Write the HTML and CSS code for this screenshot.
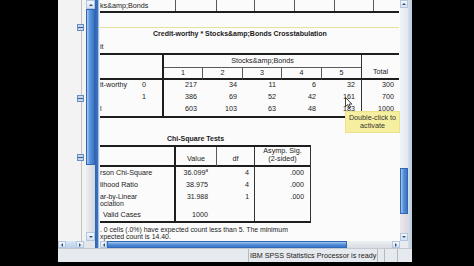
FILE: index.html
```html
<!DOCTYPE html>
<html lang="en">
<head>
<meta charset="utf-8">
<title>IBM SPSS Statistics Viewer</title>
<link rel="stylesheet" href="styles.css">
</head>
<body>
<div class="screen">
  <div class="window">
    <div class="panes">
      <div class="outline">
        <div class="outline-main">
          <div class="tree">
            <span class="node node-a"></span>
            <span class="node node-b"></span>
            <span class="node node-c"></span>
          </div>
          <div class="vscroll vs-left">
            <span class="sb-btn up"></span>
            <span class="vthumb thumb-left"></span>
            <span class="sb-track vtrack"></span>
            <span class="sb-btn down"></span>
          </div>
        </div>
        <div class="outline-bottom">
          <div class="hs-left">
            <span class="sb-btn left"></span>
            <span class="hs-left-thumb"></span>
            <span class="sb-btn right"></span>
          </div>
          <div class="outline-corner"></div>
        </div>
      </div>
      <div class="splitter"></div>
      <div class="viewer">
        <div class="viewer-main">
          <div class="content">
            <div class="prev-table">
              <div class="pcell">ks&amp;amp;Bonds</div>
              <div class="pcell"></div>
              <div class="pcell"></div>
              <div class="pcell"></div>
              <div class="pcell"></div>
              <div class="pcell"></div>
              <div class="pcell"></div>
            </div>
            <div class="sel-line"></div>
            <div class="title title-xt">Credit-worthy * Stocks&amp;amp;Bonds Crosstabulation</div>
            <div class="caption">it</div>
            <div class="xt">
              <div class="xt-stub"></div>
              <div class="xt-span">Stocks&amp;amp;Bonds</div>
              <div class="xt-total">Total</div>
              <div class="xt-num">1</div>
              <div class="xt-num">2</div>
              <div class="xt-num">3</div>
              <div class="xt-num">4</div>
              <div class="xt-num last">5</div>

              <div class="xt-label">it-worthy</div>
              <div class="xt-label b">0</div>
              <div class="xt-val">217</div>
              <div class="xt-val">34</div>
              <div class="xt-val">11</div>
              <div class="xt-val">6</div>
              <div class="xt-val">32</div>
              <div class="xt-val tot">300</div>

              <div class="xt-label"></div>
              <div class="xt-label b">1</div>
              <div class="xt-val">386</div>
              <div class="xt-val">69</div>
              <div class="xt-val">52</div>
              <div class="xt-val">42</div>
              <div class="xt-val">161</div>
              <div class="xt-val tot">700</div>

              <div class="xt-label">l</div>
              <div class="xt-label b"></div>
              <div class="xt-val">603</div>
              <div class="xt-val">103</div>
              <div class="xt-val">63</div>
              <div class="xt-val">48</div>
              <div class="xt-val">183</div>
              <div class="xt-val tot">1000</div>
            </div>

            <div class="title title-chi">Chi-Square Tests</div>
            <div class="chi">
              <div class="ch-h stub"></div>
              <div class="ch-h value">Value</div>
              <div class="ch-h df">df</div>
              <div class="ch-h sig">Asymp. Sig.<br>(2-sided)</div>

              <div class="ch-stub">rson Chi-Square</div>
              <div class="ch-val value">36.099<sup class="note">a</sup></div>
              <div class="ch-val df">4</div>
              <div class="ch-val sig">.000</div>

              <div class="ch-stub">lihood Ratio</div>
              <div class="ch-val value">38.975</div>
              <div class="ch-val df">4</div>
              <div class="ch-val sig">.000</div>

              <div class="ch-stub tall">ar-by-Linear<br>ociation</div>
              <div class="ch-val value tall">31.988</div>
              <div class="ch-val df tall">1</div>
              <div class="ch-val sig tall">.000</div>

              <div class="ch-stub indent">Valid Cases</div>
              <div class="ch-val value">1000</div>
              <div class="ch-val df"></div>
              <div class="ch-val sig"></div>
            </div>
            <div class="footnote">. 0 cells (.0%) have expected count less than 5. The minimum<br>xpected count is 14.40.</div>

            <div class="tooltip">Double-click to<br>activate</div>
            <svg class="cursor" width="8" height="12" viewBox="0 0 8 12">
              <path d="M0.5 0.5 L0.5 9.5 L2.6 7.6 L4 10.8 L5.4 10.2 L4 7.1 L6.8 7.1 Z" fill="#ffffff" stroke="#111111" stroke-width="0.8" stroke-linejoin="round"/>
            </svg>
          </div>
          <div class="vscroll vs-right">
            <span class="sb-btn up"></span>
            <span class="sb-track rtrack-a"></span>
            <span class="vthumb thumb-right"></span>
            <span class="sb-track rtrack-b"></span>
            <span class="sb-btn down"></span>
          </div>
        </div>
        <div class="viewer-bottom">
          <div class="hscroll">
            <span class="sb-btn left"></span>
            <span class="hthumb"></span>
            <span class="sb-track htrack"></span>
            <span class="sb-btn right"></span>
          </div>
          <div class="corner"></div>
        </div>
      </div>
      <div class="frame-right"></div>
    </div>
    <div class="statusbar">
      <div class="sb-cell sb-first"></div>
      <div class="sb-cell sb-msg">IBM SPSS Statistics Processor is ready</div>
      <div class="sb-cell sb-s1"></div>
      <div class="sb-cell sb-s2"></div>
      <div class="sb-cell sb-s3"></div>
    </div>
  </div>
</div>
</body>
</html>
```
FILE: styles.css
```css
* { box-sizing: border-box; }
html, body { margin: 0; padding: 0; }
body {
  background: #000;
  width: 474px;
  height: 266px;
  overflow: hidden;
  font-family: "Liberation Sans", Arial, sans-serif;
  font-size: 7.2px;
  color: #222;
}
.screen { display: flex; padding-left: 58px; height: 266px; }
.window {
  display: flex;
  flex-direction: column;
  width: 354px;
  height: 262px;
  background: #e3e7ec;
}
.panes { display: flex; height: 248px; }

/* outline pane */
.outline { display: flex; flex-direction: column; width: 37px; }
.outline-main { display: flex; height: 241px; }
.tree {
  display: flex;
  flex-direction: column;
  width: 28px;
  background: linear-gradient(90deg, transparent 23px, #c2c2c2 23px, #c2c2c2 24px, transparent 24px), #f3f3f3;
}
.node {
  display: block;
  width: 7px;
  height: 7px;
  margin-left: 19px;
  border: 1px solid #6a8cbf;
  background: linear-gradient(#c6d6ee 0, #c6d6ee 2px, #3a5e9a 2px, #3a5e9a 3px, #c6d6ee 3px);
}
.node-a { margin-top: 24px; }
.node-b { margin-top: 64px; }
.node-c { margin-top: 52px; }

.vscroll { display: flex; flex-direction: column; }
.vs-left { width: 9px; }
.vs-right { width: 8px; height: 241px; }
.sb-btn {
  display: flex;
  align-items: center;
  justify-content: center;
  flex: none;
  background: linear-gradient(#f4f8fd, #d3e1f3);
  border: 1px solid #b3c6de;
}
.vs-left .sb-btn { height: 9px; }
.vs-right .sb-btn { height: 8px; }
.up::after, .down::after, .left::after, .right::after { content: ""; display: block; }
.up::after { border-left: 2px solid transparent; border-right: 2px solid transparent; border-bottom: 2px solid #3d4f6b; }
.down::after { border-left: 2px solid transparent; border-right: 2px solid transparent; border-top: 2px solid #3d4f6b; }
.left::after { border-top: 2px solid transparent; border-bottom: 2px solid transparent; border-right: 2px solid #3d4f6b; }
.right::after { border-top: 2px solid transparent; border-bottom: 2px solid transparent; border-left: 2px solid #3d4f6b; }

.vthumb {
  flex: none;
  background: linear-gradient(90deg, #a9c9ee, #5b93da 40%, #3b74c6);
  border: 1px solid #3168b4;
}
.thumb-left { height: 156px; }
.thumb-right { height: 46px; }
.sb-track { flex: 1; }
.vtrack { background: linear-gradient(90deg, #eceef1, #d2d6db); }
.rtrack-a { flex: none; height: 160px; background: linear-gradient(90deg, #f1f4f8, #e2e8ef); }
.rtrack-b { background: linear-gradient(90deg, #ece8ee, #dcd7df); }

.outline-bottom { display: flex; height: 7px; }
.hs-left { display: flex; width: 26px; }
.hs-left .sb-btn { width: 8px; }
.hs-left-thumb { width: 10px; background: linear-gradient(#d9e6f6, #b9cfea); }
.outline-corner { width: 11px; background: #e3e6ea; }

.splitter {
  width: 5px;
  background: linear-gradient(90deg, #2f63ad 0, #3e74c0 3px, #a7c2e6 3px, #a7c2e6 4px, #e9f0f9 4px);
}

/* viewer pane */
.viewer { display: flex; flex-direction: column; width: 308px; }
.viewer-main { display: flex; height: 241px; }
.content {
  position: relative;
  display: flex;
  flex-direction: column;
  align-items: flex-start;
  width: 300px;
  height: 241px;
  overflow: hidden;
  background: #fbfbfb;
}
.viewer-bottom { display: flex; height: 7px; }
.hscroll { display: flex; width: 300px; }
.hscroll .sb-btn { width: 7px; }
.hscroll .sb-btn.right { width: 8px; }
.hthumb {
  width: 240px;
  background: linear-gradient(#a9c9ee, #5b93da 45%, #3b74c6);
  border: 1px solid #3168b4;
}
.htrack { background: linear-gradient(#eef1f4, #d8dce1); }
.corner { width: 8px; background: #e8ebef; }
.frame-right { width: 4px; background: linear-gradient(90deg, #d6e0ec, #b9c8da); }

/* previous table (scrolled off) */
.prev-table {
  display: grid;
  grid-template-columns: 76px 41px 38px 40px 40px 39px 25px;
  width: 299px;
  height: 13px;
  border-bottom: 2px solid #1e1e1e;
}
.pcell {
  border-right: 1px solid #5a5a5a;
  line-height: 11px;
  white-space: nowrap;
  overflow: hidden;
}
.pcell:last-child { border-right: 0; }
.sel-line { width: 299px; height: 1px; margin-top: 14px; background: #e2e29a; }

.title { font-weight: bold; font-size: 7px; line-height: 10px; white-space: nowrap; color: #1a1a1a; }
.title-xt { margin-top: 1px; padding-left: 53px; }
.caption { margin-top: 3px; line-height: 10px; }

/* crosstab */
.xt {
  margin-top: 1px;
  display: grid;
  grid-template-columns: 38px 26px 39px 40px 39px 40px 39px 38px;
  grid-template-rows: 13px 12px 12px 12px 12px;
  width: 299px;
  border-top: 2px solid #1e1e1e;
  border-bottom: 2px solid #1e1e1e;
}
.xt > div, .chi > div { white-space: nowrap; overflow: hidden; }
.xt-stub { grid-column: span 2; grid-row: span 2; border-right: 2px solid #1e1e1e; border-bottom: 2px solid #1e1e1e; }
.xt-span { grid-column: span 5; border-bottom: 1px solid #5a5a5a; text-align: center; line-height: 11px; }
.xt-total {
  grid-row: span 2;
  display: flex;
  align-items: flex-end;
  justify-content: center;
  border-left: 1px solid #333;
  border-bottom: 2px solid #1e1e1e;
  padding-bottom: 2px;
  line-height: 9px;
}
.xt-num { text-align: center; border-bottom: 2px solid #1e1e1e; border-right: 1px solid #5a5a5a; line-height: 9px; }
.xt-num.last { border-right: 0; }
.xt-label { line-height: 10px; }
.xt-label.b { border-right: 2px solid #1e1e1e; padding-left: 4px; }
.xt-val { text-align: right; padding-right: 6px; line-height: 10px; }
.xt-val.tot { border-left: 1px solid #333; padding-right: 5px; }

/* chi-square */
.title-chi { margin-top: 16px; padding-left: 67px; }
.chi {
  margin-top: 1px;
  display: grid;
  grid-template-columns: 76px 41px 38px 55px;
  grid-template-rows: 20px 12px 12px 18px 12px;
  border-top: 2px solid #1e1e1e;
  border-bottom: 2px solid #1e1e1e;
  border-right: 1px solid #333;
}
.ch-h {
  display: flex;
  align-items: flex-end;
  justify-content: center;
  text-align: center;
  border-bottom: 2px solid #1e1e1e;
  padding-bottom: 2px;
  line-height: 8px;
}
.ch-h.stub { border-right: 2px solid #1e1e1e; }
.ch-h.value { border-right: 1px solid #5a5a5a; }
.ch-h.df { border-right: 1px solid #333; }
.ch-stub { border-right: 2px solid #1e1e1e; line-height: 12px; }
.ch-stub.indent { padding-left: 3px; }
.ch-val { text-align: right; line-height: 12px; }
.ch-val.value { padding-right: 9px; }
.ch-val.df { padding-right: 5px; border-right: 1px solid #333; }
.ch-val.sig { padding-right: 6px; }
.chi .tall { font-size: 6.9px; line-height: 7.5px; padding-top: 1.5px; }
.note { font-size: 4.5px; line-height: 0; vertical-align: 3px; }

.footnote { margin-top: 2.5px; font-size: 6.9px; line-height: 7.5px; white-space: nowrap; }

/* overlays */
.tooltip {
  position: absolute;
  left: 245px;
  top: 111px;
  width: 55px;
  height: 22px;
  padding-top: 2px;
  background: #f6ef9f;
  border: 1px solid #ebe28a;
  text-align: center;
  line-height: 8px;
  color: #333;
}
.cursor { position: absolute; left: 245px; top: 97px; }

/* status bar */
.statusbar {
  display: flex;
  height: 14px;
  border-top: 1px solid #c3c9d1;
  background: #e6e9ed;
}
.sb-cell { border-left: 1px solid #b5bac1; line-height: 13px; white-space: nowrap; }
.sb-first { width: 190px; border-left: 0; }
.sb-msg { width: 129px; padding-left: 1px; }
.sb-s1 { width: 7px; }
.sb-s2 { width: 13px; }
.sb-s3 { width: 15px; }
```
